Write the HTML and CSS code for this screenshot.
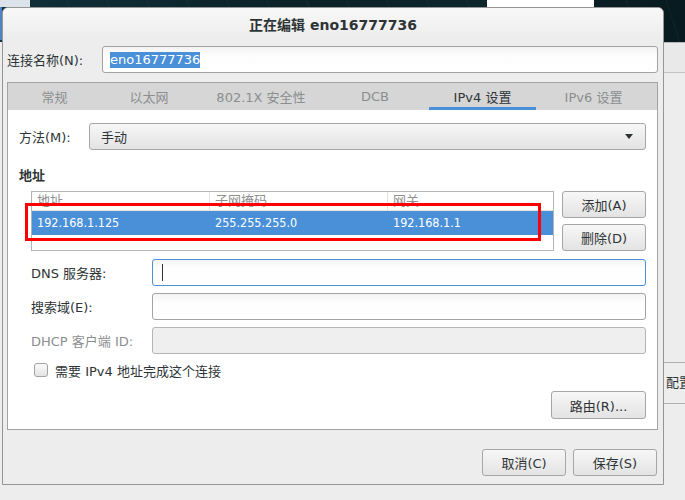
FILE: index.html
```html
<!DOCTYPE html>
<html lang="zh-CN">
<head>
<meta charset="utf-8">
<title>正在编辑 eno16777736</title>
<link rel="stylesheet" href="styles.css">
</head>
<body>
<div class="desk-top"></div>
<div class="desk-tile"></div>
<div class="desk-strip"></div>
<div class="desk-bar"></div>
<div class="side-panel">
  <div class="side-head"></div>
  <div class="side-btn">配置...</div>
</div>

<div class="dialog">
  <div class="titlebar">正在编辑 eno16777736</div>
  <div class="dlg-body">
    <div class="name-row">
      <span class="name-label">连接名称(N):</span>
      <div class="entry name-entry"><span class="sel">eno16777736</span></div>
    </div>

    <div class="notebook">
      <div class="tabs">
        <div class="tab">常规</div>
        <div class="tab">以太网</div>
        <div class="tab">802.1X 安全性</div>
        <div class="tab">DCB</div>
        <div class="tab active">IPv4 设置</div>
        <div class="tab">IPv6 设置</div>
      </div>
      <div class="page">
        <div class="method-row">
          <span class="method-label">方法(M):</span>
          <div class="combo btnlike"><span>手动</span><span class="arrow"></span></div>
        </div>

        <div class="section-title">地址</div>

        <div class="addr-block">
          <div class="addr-list">
            <div class="addr-head">
              <div class="cell">地址</div>
              <div class="cell">子网掩码</div>
              <div class="cell last">网关</div>
            </div>
            <div class="addr-row">
              <div class="cell">192.168.1.125</div>
              <div class="cell">255.255.255.0</div>
              <div class="cell">192.168.1.1</div>
            </div>
          </div>
          <div class="addr-buttons">
            <div class="btn btnlike">添加(A)</div>
            <div class="btn btnlike">删除(D)</div>
          </div>
        </div>

        <div class="form-grid">
          <span class="form-label">DNS 服务器:</span>
          <div class="entry focus"><span class="caret"></span></div>
          <span class="form-label">搜索域(E):</span>
          <div class="entry"></div>
          <span class="form-label dim">DHCP 客户端 ID:</span>
          <div class="entry disabled"></div>
        </div>

        <div class="check-row">
          <span class="checkbox"></span>
          <span>需要 IPv4 地址完成这个连接</span>
        </div>

        <div class="route-row">
          <div class="btn btnlike route-btn">路由(R)...</div>
        </div>
      </div>
    </div>

    <div class="footer">
      <div class="btn btnlike">取消(C)</div>
      <div class="btn btnlike">保存(S)</div>
    </div>
  </div>
  <div class="redbox"></div>
</div>
</body>
</html>
```

FILE: styles.css
```css
html, body {
  margin: 0;
  padding: 0;
}

body {
  width: 685px;
  height: 500px;
  overflow: hidden;
  position: relative;
  background: #ededed;
  font-family: "DejaVu Sans", "Noto Sans CJK SC", sans-serif;
  font-size: 13px;
  color: #2e3436;
}

/* desktop background pieces */
.desk-top {
  position: absolute;
  left: 0;
  top: 0;
  width: 685px;
  height: 42px;
  background:
    repeating-linear-gradient(72deg, rgba(120, 170, 180, 0.06) 0 1px, transparent 1px 38px),
    linear-gradient(100deg, #10303a 0%, #0b2128 45%, #0d262d 70%, #081a1f 100%);
}

.desk-tile {
  position: absolute;
  left: 0;
  top: 0;
  width: 30px;
  height: 7px;
  background: #dce3ea;
}

.desk-strip {
  position: absolute;
  left: 0;
  top: 7px;
  width: 2px;
  height: 33px;
  background: #4f82c4;
}

.desk-bar {
  position: absolute;
  left: 487px;
  top: 0;
  width: 107px;
  height: 7px;
  background: #ffffff;
}

.side-panel {
  position: absolute;
  left: 663px;
  top: 42px;
  width: 40px;
  height: 443px;
  background: #ededed;
  border-top: 1px solid #b8b8b8;
}

.side-head {
  height: 29px;
  border-bottom: 1px solid #c2c2c2;
  background: #e9e9e9;
}

.side-btn {
  margin-top: 289px;
  height: 40px;
  line-height: 40px;
  padding-left: 3px;
  border-top: 1px solid #b0b0b0;
  border-bottom: 1px solid #b0b0b0;
  white-space: nowrap;
}

/* dialog window */
.dialog {
  position: absolute;
  left: 2px;
  top: 7px;
  width: 662px;
  height: 478px;
  box-sizing: border-box;
  border: 1px solid #969696;
  border-radius: 6px 6px 0 0;
  background: #ededed;
  display: flex;
  flex-direction: column;
}

.titlebar {
  height: 32px;
  display: flex;
  align-items: center;
  justify-content: center;
  font-weight: bold;
  font-size: 14px;
  color: #2e3436;
  background: linear-gradient(#f8f8f8, #ececec);
  border-radius: 5px 5px 0 0;
}

.dlg-body {
  flex: 1;
  display: flex;
  flex-direction: column;
  padding: 6px 5px 0 4px;
}

.name-row {
  display: flex;
  align-items: center;
  height: 27px;
}

.name-label {
  width: 95px;
  flex: none;
}

.entry {
  box-sizing: border-box;
  height: 27px;
  border: 1px solid #a3a3a3;
  border-radius: 3px;
  background: linear-gradient(#f3f3f3, #fdfdfd 8px, #ffffff);
  display: flex;
  align-items: center;
  padding: 0 7px;
}

.name-entry {
  flex: 1;
}

.sel {
  background: #4a90d9;
  color: #ffffff;
  line-height: 16px;
}

/* notebook */
.notebook {
  margin-top: 9px;
  border: 1px solid #a3a3a3;
  display: flex;
  flex-direction: column;
  background: #ffffff;
}

.tabs {
  display: grid;
  grid-template-columns: 85px 104px 120px 108px 107px 115px;
  padding-left: 4px;
  height: 27px;
  background: #d6d6d6;
}

.tab {
  display: flex;
  align-items: center;
  justify-content: center;
  color: #8b8e8f;
  white-space: nowrap;
}

.tab.active {
  color: #2e3436;
  box-shadow: inset 0 -3px 0 #4a90d9;
}

.page {
  display: flex;
  flex-direction: column;
  padding: 13px 11px 10px 11px;
}

.method-row {
  display: flex;
  align-items: center;
}

.method-label {
  width: 70px;
  flex: none;
}

.btnlike {
  box-sizing: border-box;
  border: 1px solid #a6a6a6;
  border-radius: 3px;
  background: linear-gradient(#f7f7f7, #e3e3e3);
  color: #2e3436;
}

.combo {
  flex: 1;
  height: 27px;
  display: flex;
  align-items: center;
  justify-content: space-between;
  padding: 0 12px 0 11px;
}

.arrow {
  width: 0;
  height: 0;
  border-left: 4px solid transparent;
  border-right: 4px solid transparent;
  border-top: 5px solid #2e3436;
}

.section-title {
  margin-top: 18px;
  line-height: 16px;
  font-weight: bold;
}

.addr-block {
  margin-top: 7px;
  margin-left: 12px;
  display: flex;
  gap: 8px;
}

.addr-list {
  flex: 1;
  box-sizing: border-box;
  height: 60px;
  border: 1px solid #b4b4b4;
  background: #ffffff;
}

.addr-head,
.addr-row {
  display: grid;
  grid-template-columns: 178px 178px 1fr;
}

.addr-head {
  height: 18px;
  border-bottom: 1px solid #e4e4e4;
  color: #909090;
  line-height: 18px;
}

.addr-head .cell {
  border-right: 1px solid #e2e2e2;
}

.addr-head .cell.last {
  border-right: none;
}

.cell {
  padding-left: 5px;
  white-space: nowrap;
}

.addr-row {
  height: 24px;
  line-height: 24px;
  background: #4a90d9;
  color: #ffffff;
  font-family: "DejaVu Sans Condensed", "DejaVu Sans", sans-serif;
  font-stretch: condensed;
  font-size: 12.5px;
}

.addr-buttons {
  width: 84px;
  display: flex;
  flex-direction: column;
  gap: 6px;
}

.btn {
  height: 27px;
  display: flex;
  align-items: center;
  justify-content: center;
  white-space: nowrap;
}

.form-grid {
  margin-top: 8px;
  margin-left: 12px;
  display: grid;
  grid-template-columns: 121px 1fr;
  row-gap: 7px;
  align-items: center;
}

.form-label {
  white-space: nowrap;
}

.form-label.dim {
  color: #8b8e8f;
}

.entry.focus {
  border-color: #4a90d9;
  padding-left: 9px;
}

.caret {
  width: 1px;
  height: 17px;
  background: #2e3436;
}

.entry.disabled {
  background: #efefef;
  border-color: #b4b4b4;
}

.check-row {
  margin-top: 6px;
  margin-left: 15px;
  height: 20px;
  display: flex;
  align-items: center;
  gap: 7px;
}

.checkbox {
  box-sizing: border-box;
  width: 14px;
  height: 14px;
  border: 1px solid #a3a3a3;
  border-radius: 3px;
  background: linear-gradient(#fafafa, #e4e4e4);
}

.route-row {
  margin-top: 11px;
  display: flex;
  justify-content: flex-end;
}

.route-btn {
  width: 95px;
  height: 28px;
}

.footer {
  margin-top: 19px;
  padding-right: 1px;
  display: flex;
  justify-content: flex-end;
  gap: 7px;
}

.footer .btn {
  width: 84px;
}

.redbox {
  position: absolute;
  left: 22px;
  top: 195px;
  width: 516px;
  height: 38px;
  box-sizing: border-box;
  border: 3px solid #ff0000;
}
```
